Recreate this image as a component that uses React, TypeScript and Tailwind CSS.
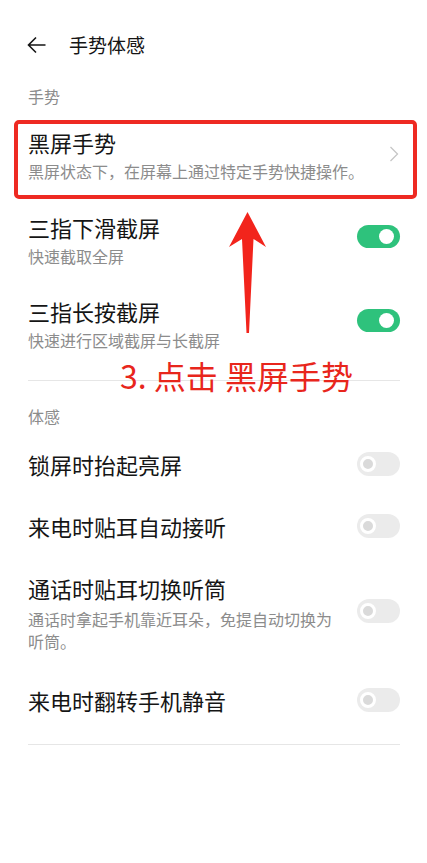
import React from 'react'

type Row = {
  title: string
  desc?: string
  on?: boolean
  link?: boolean
}

const gestureRows: Row[] = [
  { title: '黑屏手势', desc: '黑屏状态下，在屏幕上通过特定手势快捷操作。', link: true },
  { title: '三指下滑截屏', desc: '快速截取全屏', on: true },
  { title: '三指长按截屏', desc: '快速进行区域截屏与长截屏', on: true },
]

const senseRows: Row[] = [
  { title: '锁屏时抬起亮屏', on: false },
  { title: '来电时贴耳自动接听', on: false },
  { title: '通话时贴耳切换听筒', desc: '通话时拿起手机靠近耳朵，免提自动切换为听筒。', on: false },
  { title: '来电时翻转手机静音', on: false },
]

const Toggle = ({ on, shift }: { on: boolean; shift: boolean }) =>
  on ? (
    <div
      className={`flex h-[23px] w-[43px] shrink-0 items-center justify-end rounded-full bg-[#2ec27c] pr-[6px] ${shift ? 'mb-2' : ''}`}
    >
      <div className="h-[15px] w-[15px] rounded-full bg-white" />
    </div>
  ) : (
    <div
      className={`flex h-[24px] w-[43px] shrink-0 items-center justify-start rounded-full bg-[#ebebeb] pl-[3px] ${shift ? 'mb-1' : ''}`}
    >
      <div className="h-[16px] w-[16px] rounded-full border-[3px] border-white bg-[#dadada]" />
    </div>
  )

const SettingRow = ({ row, first }: { row: Row; first?: boolean }) => {
  const pad = row.desc ? (first ? 'pt-[21px] pb-[16px]' : row.on ? 'py-[15px]' : 'py-[17px]') : 'py-[17px]'
  return (
    <div className={`relative flex items-center gap-3 pl-[28px] pr-[27px] ${pad}`}>
      <div className="min-w-0 flex-1">
        <div className="text-[22px] leading-[28px] text-[#151515]">{row.title}</div>
        {row.desc && (
          <div className={`${row.on === false ? 'mt-[6px]' : 'mt-1'} text-[16px] leading-[22px] text-[#8c8c8c]`}>
            {row.desc}
          </div>
        )}
      </div>
      {row.link ? (
        <svg width="10" height="16" viewBox="0 0 10 16" className="mb-[2px] mr-[1px] shrink-0">
          <path d="M1.5 1 L8.5 8 L1.5 15" fill="none" stroke="#c6c6c6" strokeWidth="1.3" />
        </svg>
      ) : (
        <Toggle on={!!row.on} shift={!!row.desc} />
      )}
      {first && (
        <div className="pointer-events-none absolute top-[13px] bottom-[-1px] left-[14px] right-[10px] rounded-[5px] border-4 border-[#ee2a22]" />
      )}
    </div>
  )
}

export default function App() {
  return (
    <div className="relative min-h-[863px] w-full bg-white font-[family-name:'Noto_Sans_CJK_SC',sans-serif]">
      <div className="flex items-center gap-[23px] pl-[27px] pt-[31px]">
        <svg width="19" height="18" viewBox="0 0 19 18">
          <path d="M18.5 9 H1.5 M9 1.5 L1.5 9 L9 16.5" fill="none" stroke="#151515" strokeWidth="1.6" />
        </svg>
        <span className="text-[19px] leading-[28px] text-[#151515]">手势体感</span>
      </div>

      <div className="mt-[26px] pl-[28px] text-[16px] leading-[22px] text-[#8c8c8c]">手势</div>
      {gestureRows.map((row, i) => (
        <SettingRow key={row.title} row={row} first={i === 0} />
      ))}

      <div className="ml-[28px] mr-[27px] mt-[14px] border-t border-[#e6e6e6]" />

      <div className="mt-[24px] mb-[6px] pl-[28px] text-[16px] leading-[22px] text-[#8c8c8c]">体感</div>
      {senseRows.map((row) => (
        <SettingRow key={row.title} row={row} />
      ))}

      <div className="ml-[28px] mr-[27px] mt-[13px] border-t border-[#e6e6e6]" />

      {/* annotation overlay */}
      <svg
        className="pointer-events-none absolute left-[226px] top-[208px]"
        width="44"
        height="128"
        viewBox="226 208 44 128"
      >
        <path
          d="M247.5 212 L266 247 L253.5 239 L249 333 L246.5 333 L242 239 L229 247 Z"
          fill="#f2241c"
        />
      </svg>
      <div className="pointer-events-none absolute left-[120px] top-[355px] text-[32px] leading-[40px] text-[#e8261c]">
        3. 点击 黑屏手势
      </div>
    </div>
  )
}
